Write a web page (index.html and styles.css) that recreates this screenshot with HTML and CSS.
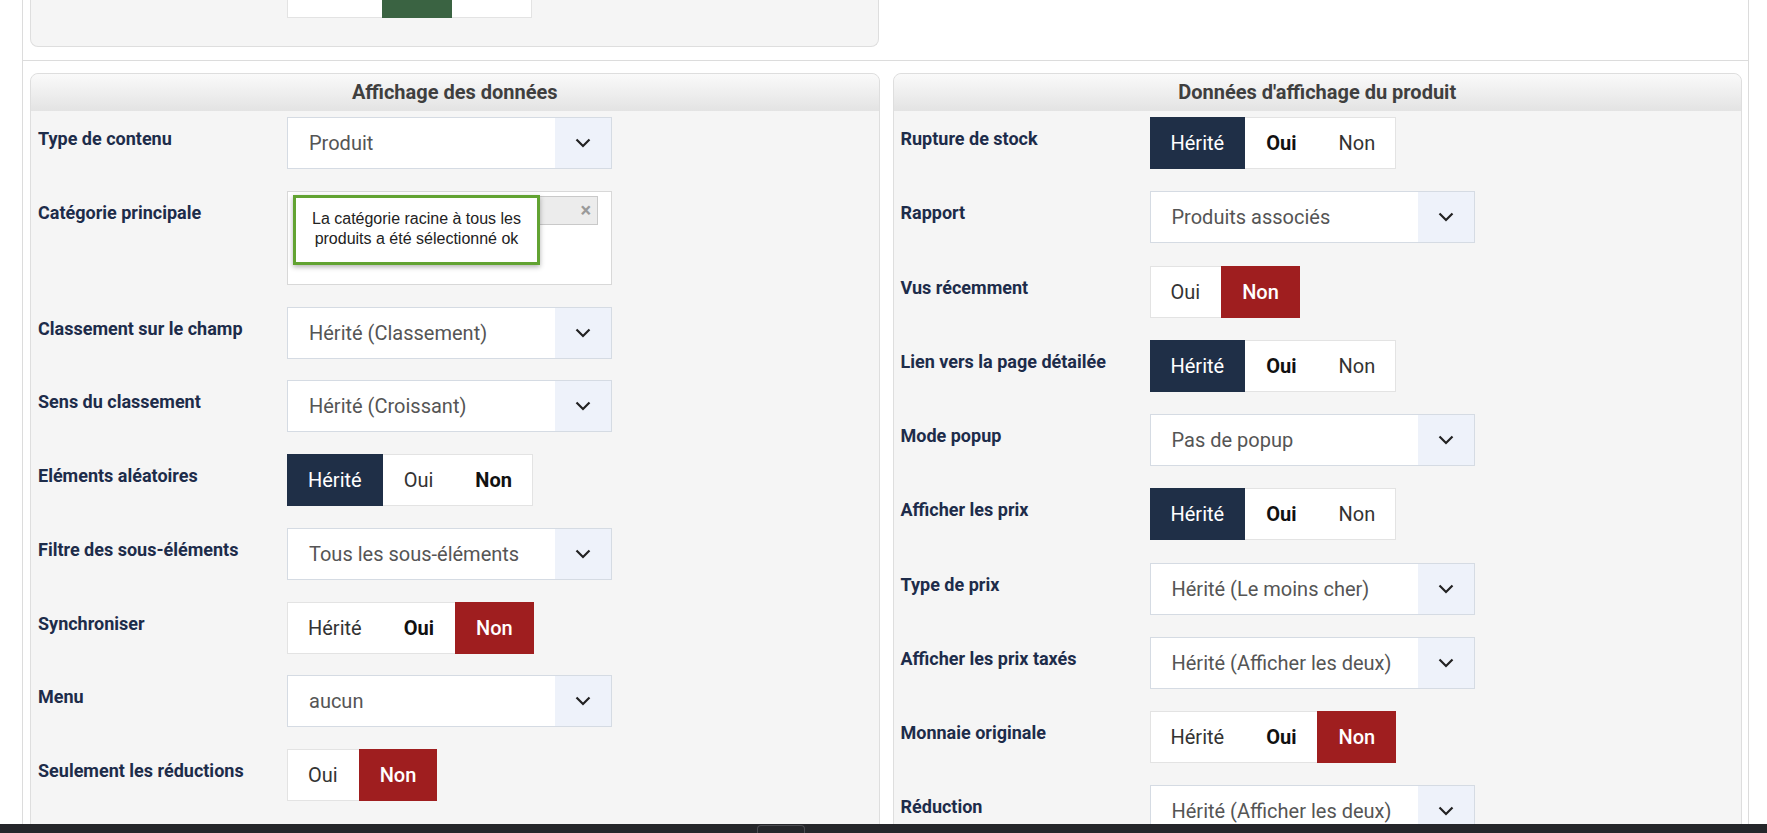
FILE: index.html
```html
<!DOCTYPE html>
<html lang="fr">
<head>
    <meta charset="UTF-8" />
    <meta name="viewport" content="width=device-width, initial-scale=1.0"/>
    <title>Module produits</title>
    <link rel="stylesheet" href="styles.css">
</head>
<body>
    <div class="page">

        <!-- end of the previous block, mostly scrolled away -->
        <div class="top-row">
            <div class="panel panel-tail">
                <div class="panel-body">
                    <div class="field">
                        <span class="field-label"></span>
                        <div class="toggle toggle-cut">
                            <span class="opt w-herite"></span>
                            <span class="opt w-oui on-green"></span>
                            <span class="opt w-non"></span>
                        </div>
                    </div>
                </div>
            </div>
            <div></div>
        </div>

        <div class="columns">
            <!-- Left column -->
            <section class="panel panel-display">
                <h2 class="panel-title">Affichage des données</h2>
                <div class="panel-body">
                    <div class="field">
                        <label class="field-label">Type de contenu</label>
                        <div class="select">
                            <span class="select-value">Produit</span>
                            <span class="select-arrow"><svg width="16" height="10" viewBox="0 0 16 10"><polyline points="1.5,1.5 8,8 14.5,1.5" /></svg></span>
                        </div>
                    </div>

                    <div class="field">
                        <label class="field-label">Catégorie principale</label>
                        <div class="tag-box">
                            <span class="tag"><span class="tag-close">&times;</span></span>
                            <div class="tooltip">La catégorie racine à tous les<br>produits a été sélectionné ok</div>
                        </div>
                    </div>

                    <div class="field">
                        <label class="field-label">Classement sur le champ</label>
                        <div class="select">
                            <span class="select-value">Hérité (Classement)</span>
                            <span class="select-arrow"><svg width="16" height="10" viewBox="0 0 16 10"><polyline points="1.5,1.5 8,8 14.5,1.5" /></svg></span>
                        </div>
                    </div>

                    <div class="field">
                        <label class="field-label">Sens du classement</label>
                        <div class="select">
                            <span class="select-value">Hérité (Croissant)</span>
                            <span class="select-arrow"><svg width="16" height="10" viewBox="0 0 16 10"><polyline points="1.5,1.5 8,8 14.5,1.5" /></svg></span>
                        </div>
                    </div>

                    <div class="field">
                        <label class="field-label">Eléments aléatoires</label>
                        <div class="toggle">
                            <span class="opt on-dark">Hérité</span>
                            <span class="opt">Oui</span>
                            <span class="opt default">Non</span>
                        </div>
                    </div>

                    <div class="field">
                        <label class="field-label">Filtre des sous-éléments</label>
                        <div class="select">
                            <span class="select-value">Tous les sous-éléments</span>
                            <span class="select-arrow"><svg width="16" height="10" viewBox="0 0 16 10"><polyline points="1.5,1.5 8,8 14.5,1.5" /></svg></span>
                        </div>
                    </div>

                    <div class="field">
                        <label class="field-label">Synchroniser</label>
                        <div class="toggle">
                            <span class="opt">Hérité</span>
                            <span class="opt default">Oui</span>
                            <span class="opt on-red">Non</span>
                        </div>
                    </div>

                    <div class="field">
                        <label class="field-label">Menu</label>
                        <div class="select">
                            <span class="select-value">aucun</span>
                            <span class="select-arrow"><svg width="16" height="10" viewBox="0 0 16 10"><polyline points="1.5,1.5 8,8 14.5,1.5" /></svg></span>
                        </div>
                    </div>

                    <div class="field">
                        <label class="field-label">Seulement les réductions</label>
                        <div class="toggle">
                            <span class="opt">Oui</span>
                            <span class="opt on-red">Non</span>
                        </div>
                    </div>
                </div>
            </section>

            <!-- Right column -->
            <section class="panel">
                <h2 class="panel-title">Données d'affichage du produit</h2>
                <div class="panel-body">
                    <div class="field">
                        <label class="field-label">Rupture de stock</label>
                        <div class="toggle">
                            <span class="opt on-dark">Hérité</span>
                            <span class="opt default">Oui</span>
                            <span class="opt">Non</span>
                        </div>
                    </div>

                    <div class="field">
                        <label class="field-label">Rapport</label>
                        <div class="select">
                            <span class="select-value">Produits associés</span>
                            <span class="select-arrow"><svg width="16" height="10" viewBox="0 0 16 10"><polyline points="1.5,1.5 8,8 14.5,1.5" /></svg></span>
                        </div>
                    </div>

                    <div class="field">
                        <label class="field-label">Vus récemment</label>
                        <div class="toggle">
                            <span class="opt">Oui</span>
                            <span class="opt on-red">Non</span>
                        </div>
                    </div>

                    <div class="field">
                        <label class="field-label">Lien vers la page détailée</label>
                        <div class="toggle">
                            <span class="opt on-dark">Hérité</span>
                            <span class="opt default">Oui</span>
                            <span class="opt">Non</span>
                        </div>
                    </div>

                    <div class="field">
                        <label class="field-label">Mode popup</label>
                        <div class="select">
                            <span class="select-value">Pas de popup</span>
                            <span class="select-arrow"><svg width="16" height="10" viewBox="0 0 16 10"><polyline points="1.5,1.5 8,8 14.5,1.5" /></svg></span>
                        </div>
                    </div>

                    <div class="field">
                        <label class="field-label">Afficher les prix</label>
                        <div class="toggle">
                            <span class="opt on-dark">Hérité</span>
                            <span class="opt default">Oui</span>
                            <span class="opt">Non</span>
                        </div>
                    </div>

                    <div class="field">
                        <label class="field-label">Type de prix</label>
                        <div class="select">
                            <span class="select-value">Hérité (Le moins cher)</span>
                            <span class="select-arrow"><svg width="16" height="10" viewBox="0 0 16 10"><polyline points="1.5,1.5 8,8 14.5,1.5" /></svg></span>
                        </div>
                    </div>

                    <div class="field">
                        <label class="field-label">Afficher les prix taxés</label>
                        <div class="select">
                            <span class="select-value">Hérité (Afficher les deux)</span>
                            <span class="select-arrow"><svg width="16" height="10" viewBox="0 0 16 10"><polyline points="1.5,1.5 8,8 14.5,1.5" /></svg></span>
                        </div>
                    </div>

                    <div class="field">
                        <label class="field-label">Monnaie originale</label>
                        <div class="toggle">
                            <span class="opt">Hérité</span>
                            <span class="opt default">Oui</span>
                            <span class="opt on-red">Non</span>
                        </div>
                    </div>

                    <div class="field">
                        <label class="field-label">Réduction</label>
                        <div class="select">
                            <span class="select-value">Hérité (Afficher les deux)</span>
                            <span class="select-arrow"><svg width="16" height="10" viewBox="0 0 16 10"><polyline points="1.5,1.5 8,8 14.5,1.5" /></svg></span>
                        </div>
                    </div>
                </div>
            </section>
        </div>
    </div>

    <!-- taskbar strip at the bottom of the screen -->
    <div class="taskbar"><span class="taskbar-tab"></span></div>
</body>
</html>
```

FILE: styles.css
```css
/* General Reset */
* {
    box-sizing: border-box;
    margin: 0;
    padding: 0;
}

html {
    overflow: hidden;
}

body {
    background-color: #fff;
    color: #333;
    font-family: Roboto, 'Noto Sans', sans-serif;
}

/* Page frame */
.page {
    margin: 0 18px 0 22px;
    min-height: 100vh;
    border-left: 1px solid #dcdcdc;
    border-right: 1px solid #dcdcdc;
}

.top-row {
    display: grid;
    grid-template-columns: 1fr 1fr;
    gap: 13px;
    height: 61px;
    padding: 0 7px;
    border-bottom: 1px solid #dcdcdc;
}

.columns {
    display: grid;
    grid-template-columns: 1fr 1fr;
    gap: 13px;
    padding: 12px 6px 0 7px;
}

/* Panels */
.panel {
    background-color: #f5f5f5;
    border: 1px solid #dedede;
    border-radius: 8px;
}

.panel-tail {
    height: 47px;
    border-top: none;
    border-radius: 0 0 8px 8px;
    overflow: hidden;
}

.panel-tail .panel-body {
    padding-top: 0;
}

.toggle-cut {
    margin-top: -34px;
}

.panel-title {
    height: 37px;
    line-height: 37px;
    text-align: center;
    font-size: 20px;
    font-weight: bold;
    color: #3f3f3f;
    background: linear-gradient(to bottom, #fafafa, #e3e3e3);
    border-radius: 8px 8px 0 0;
}

.panel-body {
    padding: 6px 0 0 7px;
}

/* Form rows */
.field {
    display: flex;
    align-items: flex-start;
    margin-bottom: 22.25px;
}

.panel-display .field {
    margin-bottom: 21.75px;
}

.field-label {
    width: 249px;
    flex-shrink: 0;
    padding-top: 11px;
    font-size: 18px;
    font-weight: bold;
    color: #1d2c4a;
    line-height: 22px;
}

/* Select boxes */
.select {
    display: flex;
    width: 325px;
    height: 52px;
    background-color: #fff;
    border: 1px solid #d5dbe3;
}

.select-value {
    flex: 1;
    display: flex;
    align-items: center;
    padding-left: 21px;
    font-size: 20px;
    color: #555;
}

.select-arrow {
    width: 56px;
    display: flex;
    align-items: center;
    justify-content: center;
    background-color: #eef2fa;
}

.select-arrow polyline {
    fill: none;
    stroke: #222;
    stroke-width: 2.2;
}

/* Yes / no button groups */
.toggle {
    display: inline-flex;
    height: 52px;
    background-color: #fff;
    box-shadow: inset 0 0 0 1px #e3e3e3;
}

.opt {
    display: flex;
    align-items: center;
    padding: 0 21px;
    font-size: 20px;
    color: #333;
}

.opt.default {
    font-weight: bold;
    color: #111;
}

.opt.on-dark {
    background-color: #1f2f47;
    color: #fff;
}

.opt.on-red {
    background-color: #9f1e1f;
    color: #fff;
    font-weight: 500;
}

.opt.on-green {
    background-color: #3a6342;
}

/* fixed widths for the group cut by the top edge */
.opt.w-herite { width: 95px; }
.opt.w-oui { width: 70px; }
.opt.w-non { width: 80px; }

/* Category picker */
.tag-box {
    position: relative;
    width: 325px;
    height: 94px;
    background-color: #fff;
    border: 1px solid #d8d8d8;
    padding: 4px 13px 0 5px;
}

.tag {
    display: flex;
    justify-content: flex-end;
    align-items: center;
    height: 29px;
    background-color: #ececec;
    border: 1px solid #c9c9c9;
    padding-right: 6px;
}

.tag-close {
    font-size: 20px;
    font-weight: bold;
    color: #9a9a9a;
    line-height: 1;
}

.tooltip {
    position: absolute;
    top: 3px;
    left: 5px;
    width: 247px;
    height: 70px;
    display: flex;
    align-items: center;
    justify-content: center;
    text-align: center;
    padding-bottom: 2px;
    background-color: #fff;
    border: 3px solid #62a332;
    box-shadow: 0 2px 5px rgba(0, 0, 0, 0.3);
    font-family: 'Liberation Sans', Arial, sans-serif;
    font-size: 16px;
    line-height: 20px;
    color: #222;
}

/* Bottom strip */
.taskbar {
    position: fixed;
    left: 0;
    right: 0;
    bottom: 0;
    height: 9px;
    background-color: #25262a;
}

.taskbar-tab {
    position: absolute;
    left: 757px;
    top: 1px;
    width: 48px;
    height: 8px;
    border: 1px solid #4a4b50;
    border-bottom: none;
    border-radius: 4px 4px 0 0;
}
```
